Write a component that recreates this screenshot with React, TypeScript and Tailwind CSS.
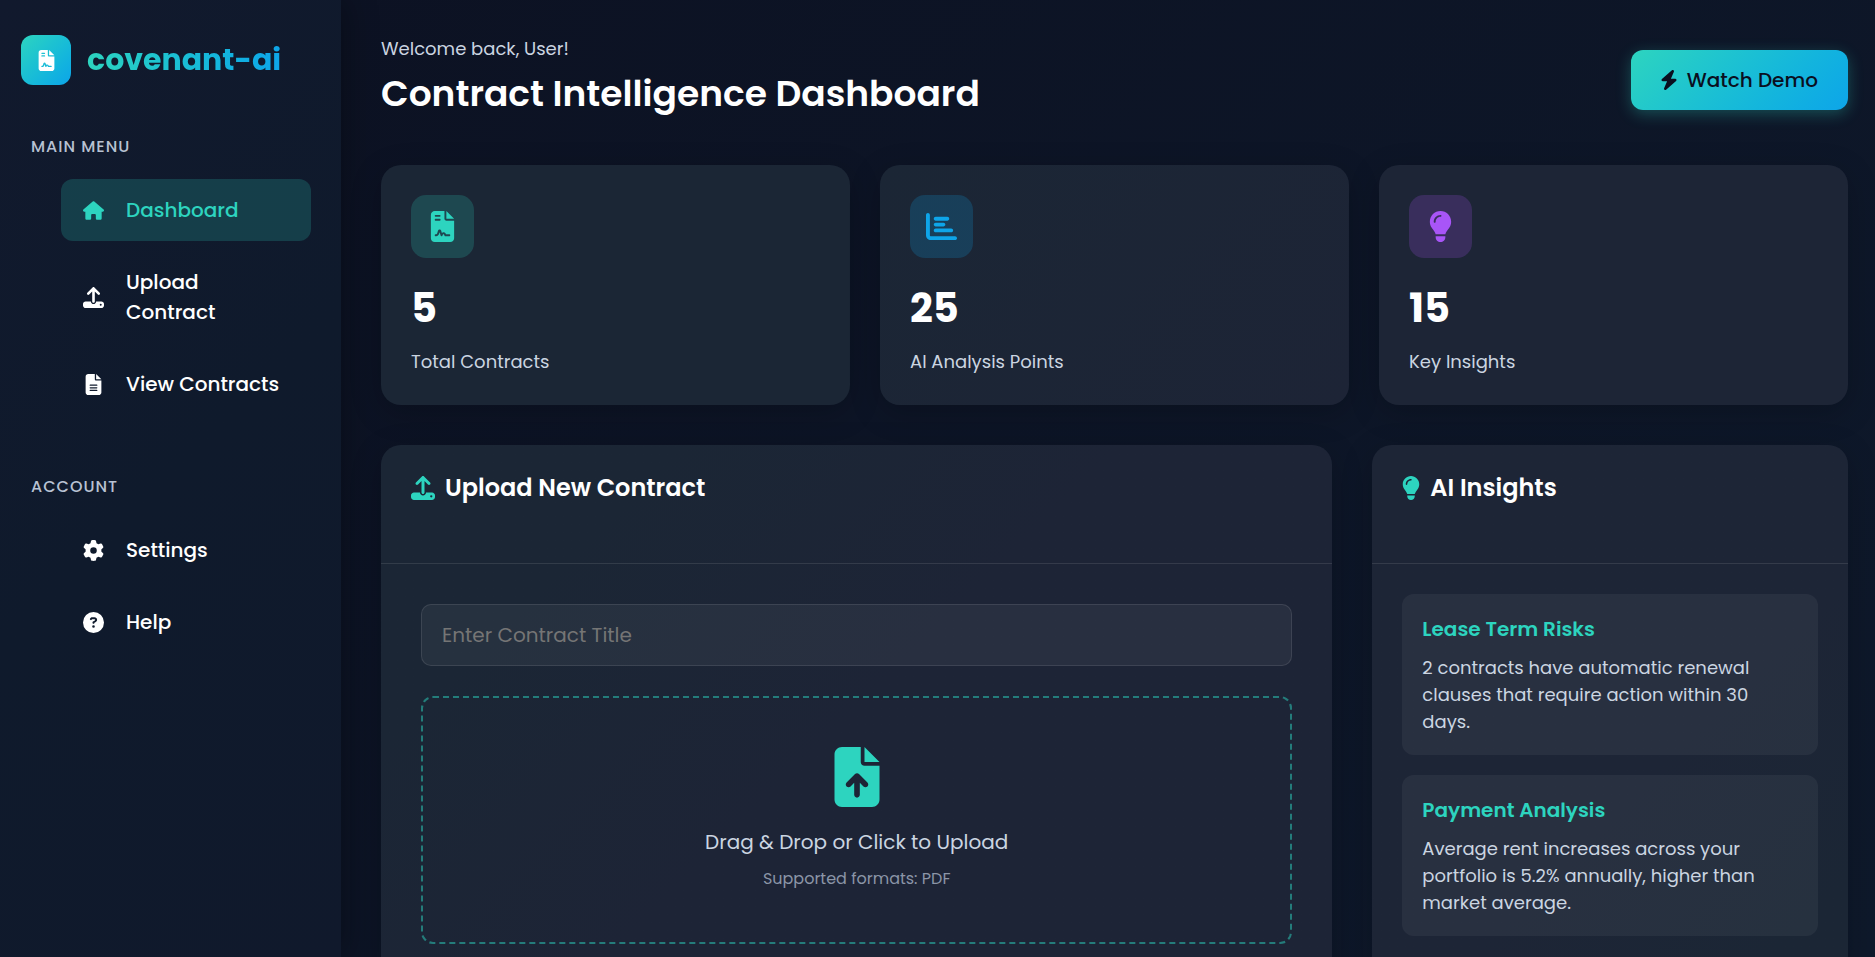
import { useState } from "react";
import type { ReactNode } from "react";
import type { IconType } from "react-icons";
import {
  FaBolt,
  FaChartBar,
  FaCircleQuestion,
  FaFileArrowUp,
  FaFileContract,
  FaFileLines,
  FaGear,
  FaHouse,
  FaLightbulb,
  FaUpload,
} from "react-icons/fa6";

type NavItem = { label: string; icon: IconType; active?: boolean };

const MAIN_MENU: NavItem[] = [
  { label: "Dashboard", icon: FaHouse, active: true },
  { label: "Upload Contract", icon: FaUpload },
  { label: "View Contracts", icon: FaFileLines },
];

const ACCOUNT_MENU: NavItem[] = [
  { label: "Settings", icon: FaGear },
  { label: "Help", icon: FaCircleQuestion },
];

const STATS = [
  {
    value: 5,
    label: "Total Contracts",
    icon: FaFileContract,
    card: "bg-[#1b2635]",
    tone: "bg-[#2dd4bf]/20 text-[#2dd4bf]",
  },
  {
    value: 25,
    label: "AI Analysis Points",
    icon: FaChartBar,
    card: "bg-linear-135 from-[#1b2635] to-[#1d2436]",
    tone: "bg-[#0ea5e9]/20 text-[#0ea5e9]",
  },
  {
    value: 15,
    label: "Key Insights",
    icon: FaLightbulb,
    card: "bg-[#1d2536]",
    tone: "bg-[#a855f7]/20 text-[#a855f7]",
  },
];

const INSIGHTS = [
  {
    title: "Lease Term Risks",
    text: "2 contracts have automatic renewal clauses that require action within 30 days.",
  },
  {
    title: "Payment Analysis",
    text: "Average rent increases across your portfolio is 5.2% annually, higher than market average.",
  },
];

function NavSection({ title, items, className }: { title: string; items: NavItem[]; className: string }) {
  return (
    <div className={className}>
      <h2 className="pl-2.5 text-[16px] leading-6 font-medium tracking-[1px] text-[#b8c2d3] uppercase">{title}</h2>
      <ul className="mt-5 space-y-2.5 pl-10">
        {items.map(({ label, icon: Icon, active }) => (
          <li key={label}>
            <a
              href="#"
              className={`flex items-center gap-[21px] rounded-xl px-5 py-4 text-[20px] leading-[30px] font-medium ${
                active ? "bg-[#2dd4bf]/20 text-[#2dd4bf]" : "text-white"
              }`}
            >
              <span className="flex w-6 shrink-0 justify-center">
                <Icon size={21} />
              </span>
              {label}
            </a>
          </li>
        ))}
      </ul>
    </div>
  );
}

type PanelProps = {
  title: string;
  icon: IconType;
  iconWidth: string;
  className: string;
  children: ReactNode;
};

function Panel({ title, icon: Icon, iconWidth, className, children }: PanelProps) {
  return (
    <section className={`rounded-[20px] shadow-[0_8px_32px_rgba(0,0,0,0.2)] ${className}`}>
      <div className="border-b border-white/10 px-[30px] pt-7 pb-[60px]">
        <h2 className="flex items-center gap-2.5 text-[24px] leading-[30px] font-semibold text-white">
          <span className={`flex shrink-0 justify-center text-[#2dd4bf] ${iconWidth}`}>
            <Icon size={24} className="shrink-0" />
          </span>
          {title}
        </h2>
      </div>
      {children}
    </section>
  );
}

export default function App() {
  const [title, setTitle] = useState("");

  return (
    <div className="flex h-screen overflow-hidden bg-linear-135 from-[#0c1122] to-[#0e192b] font-['Poppins','Inter',sans-serif] text-white antialiased">
      <aside className="z-10 w-[341px] shrink-0 bg-linear-135 from-[#11192d] via-[#0f1a2c] to-[#10192c] pt-[35px] pr-[30px] pl-[21px] shadow-[5px_0_30px_rgba(0,0,0,0.3)]">
        <div className="flex items-center gap-4">
          <div className="flex size-[50px] items-center justify-center rounded-xl bg-linear-135 from-[#2dd4bf] to-[#0ea5e9]">
            <FaFileContract size={21} />
          </div>
          <span className="bg-linear-90 from-[#2dd4bf] to-[#0ea5e9] bg-clip-text text-[30px] leading-[50px] font-bold text-transparent">
            covenant-ai
          </span>
        </div>
        <nav>
          <NavSection title="Main Menu" items={MAIN_MENU} className="mt-[50px]" />
          <NavSection title="Account" items={ACCOUNT_MENU} className="mt-[60px]" />
        </nav>
      </aside>

      <main className="min-w-0 flex-1 pt-[35px] pr-[27px] pl-10">
        <header className="flex items-center justify-between">
          <div className="pb-1">
            <p className="mb-[5px] text-[18px] leading-[27px] text-[#cbd5e1]">Welcome back, User!</p>
            <h1 className="text-[36px] leading-[54px] font-semibold">Contract Intelligence Dashboard</h1>
          </div>
          <button
            type="button"
            className="flex h-[60px] items-center gap-2.5 rounded-xl bg-linear-135 from-[#2dd4bf] to-[#0ea5e9] px-[30px] text-[20px] font-medium text-[#0a0f1f] shadow-[0_4px_15px_rgba(45,212,191,0.3)]"
          >
            <span className="flex w-4 shrink-0 justify-center">
              <FaBolt size={20} className="shrink-0" />
            </span>
            Watch Demo
          </button>
        </header>

        <div className="mt-10 grid grid-cols-3 gap-[30px]">
          {STATS.map(({ value, label, icon: Icon, card, tone }) => (
            <section
              key={label}
              className={`h-60 rounded-[20px] p-[30px] shadow-[0_8px_32px_rgba(0,0,0,0.2)] ${card}`}
            >
              <div className={`flex size-[63px] items-center justify-center rounded-[15px] ${tone}`}>
                <Icon size={31} />
              </div>
              <p className="mt-5 text-[40px] leading-[60px] font-bold">{value}</p>
              <p className="mt-2.5 text-[18px] leading-7 text-[#cbd5e1]">{label}</p>
            </section>
          ))}
        </div>

        <div className="mt-10 grid grid-cols-[2fr_1fr] gap-10">
          <Panel
            title="Upload New Contract"
            icon={FaUpload}
            iconWidth="w-6"
            className="bg-linear-135 from-[#1b2635] from-20% to-[#1d2436] to-50%"
          >
            <form className="p-10">
              <input
                type="text"
                aria-label="Contract title"
                placeholder="Enter Contract Title"
                value={title}
                onChange={(event) => setTitle(event.target.value)}
                className="h-[62px] w-full rounded-[10px] border border-white/10 bg-white/5 px-5 text-[20px] placeholder:text-[#757575]"
              />
              <label className="mt-[30px] flex h-[248px] cursor-pointer flex-col items-center rounded-xl border-2 border-dashed border-[#2dd4bf]/50 pt-[49px]">
                <FaFileArrowUp size={60} className="text-[#2dd4bf]" />
                <span className="mt-5 text-[20px] leading-[30px] text-[#cbd5e1]">Drag &amp; Drop or Click to Upload</span>
                <span className="mt-2.5 text-[16px] leading-6 text-[#8b95a7]">Supported formats: PDF</span>
                <input type="file" accept="application/pdf" className="sr-only" />
              </label>
            </form>
          </Panel>

          <Panel
            title="AI Insights"
            icon={FaLightbulb}
            iconWidth="w-[18px]"
            className="bg-linear-135 from-[#1d2536] from-60% to-[#1b2635] to-90%"
          >
            <div className="space-y-5 p-[30px]">
              {INSIGHTS.map((item) => (
                <article key={item.title} className="rounded-xl bg-white/5 p-5">
                  <h3 className="text-[20px] leading-[30px] font-semibold text-[#2dd4bf]">{item.title}</h3>
                  <p className="mt-2.5 text-[18px] leading-[27px] text-[#cbd5e1]">{item.text}</p>
                </article>
              ))}
            </div>
          </Panel>
        </div>
      </main>
    </div>
  );
}
